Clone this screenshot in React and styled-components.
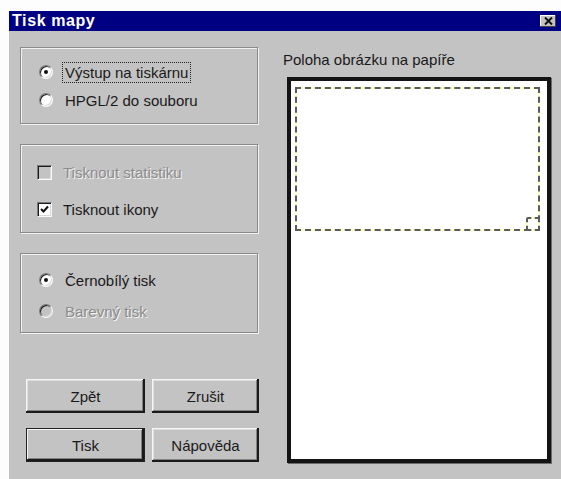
import React from "react";
import styled, { createGlobalStyle, css } from "styled-components";

const Global = createGlobalStyle`
  html, body { margin: 0; padding: 0; background: #fdfdfd; }
  body { font-family: "Liberation Sans", Arial, sans-serif; }
`;

const Dialog = styled.div`
  margin: 11px 0 0 9px;
  width: 552px;
  height: 468px;
  background: #c3c3c3;
  display: flex;
  flex-direction: column;
  overflow: hidden;
`;

const TitleBar = styled.div`
  height: 20px;
  background: #000082;
  color: #fff;
  display: flex;
  align-items: center;
  justify-content: space-between;
  padding: 0 5px 0 3px;
  font-weight: bold;
  font-size: 16px;
  letter-spacing: 0.6px;
`;

const CloseBox = styled.div`
  width: 16px;
  height: 12px;
  background: #c3c3c3;
  box-shadow: inset -1px -1px #404040, inset 1px 1px #fff;
  display: flex;
  align-items: center;
  justify-content: center;
`;

const Body = styled.div`
  flex: 1;
  display: grid;
  grid-template-columns: 238px 268px;
  column-gap: 25px;
  padding: 16px 10px 0 11px;
`;

const LeftCol = styled.div`
  display: flex;
  flex-direction: column;
`;

const Group = styled.div`
  display: flex;
  flex-direction: column;
  border: 1px solid #8a8a8a;
  box-shadow: inset 1px 1px 0 #f2f2f2, 1px 1px 0 #f2f2f2;
  padding: ${(p) => p.$pad};
  gap: ${(p) => p.$gap}px;
  margin-bottom: 20px;
`;

const Row = styled.label`
  display: flex;
  align-items: center;
  height: 20px;
  padding-left: ${(p) => p.$indent}px;
  font-size: 15px;
  color: ${(p) => (p.$disabled ? "#8c8c8c" : "#1a1a1a")};
  text-shadow: ${(p) => (p.$disabled ? "1px 1px 0 #f4f4f4" : "none")};
`;

const Radio = styled.span`
  box-sizing: border-box;
  width: 14px;
  height: 14px;
  border-radius: 50%;
  background: ${(p) => (p.$disabled ? "#c3c3c3" : "#fff")};
  border: 1px solid;
  border-color: #7a7a7a #fafafa #fafafa #7a7a7a;
  box-shadow: inset 1px 1px 0 #1a1a1a, inset -1px -1px 0 #d8d8d8;
  display: flex;
  align-items: center;
  justify-content: center;
  margin-right: ${(p) => p.$gap}px;
  flex: none;
  &::after {
    content: "";
    width: 4px;
    height: 4px;
    border-radius: 50%;
    background: #111;
    display: ${(p) => (p.$on ? "block" : "none")};
  }
`;

const Check = styled.span`
  box-sizing: border-box;
  width: 15px;
  height: 15px;
  background: ${(p) => (p.$disabled ? "#c3c3c3" : "#fff")};
  border: 1px solid;
  border-color: #7a7a7a #fafafa #fafafa #7a7a7a;
  box-shadow: inset 1px 1px 0 #1a1a1a, inset -1px -1px 0 #d8d8d8;
  margin-right: 11px;
  display: flex;
  align-items: center;
  justify-content: center;
  flex: none;
`;

const Caption = styled.span`
  padding: 1px 2px;
  margin-left: -3px;
  border: 1px dotted ${(p) => (p.$focus ? "#222" : "transparent")};
`;

const Buttons = styled.div`
  display: grid;
  grid-template-columns: 119px 107px;
  grid-auto-rows: 34px;
  column-gap: 7px;
  row-gap: 15px;
  margin: 26px 0 0 6px;
`;

const Button = styled.div`
  display: flex;
  align-items: center;
  justify-content: center;
  font-size: 15px;
  color: #1a1a1a;
  background: #c3c3c3;
  box-shadow: inset -2px -2px #1a1a1a, inset 1px 1px #f6f6f6,
    inset -3px -3px #828282, inset 2px 2px #dedede;
  ${(p) =>
    p.$default &&
    css`
      box-shadow: inset 0 0 0 1px #222, inset -3px -3px #1a1a1a,
        inset 2px 2px #f6f6f6, inset -4px -4px #828282;
    `}
`;

const RightCol = styled.div`
  display: flex;
  flex-direction: column;
  padding-top: 4px;
`;

const Label = styled.div`
  font-size: 15px;
  line-height: 18px;
  color: #1a1a1a;
  margin-bottom: 8px;
`;

const Paper = styled.div`
  box-sizing: border-box;
  height: 386px;
  margin-left: 4px;
  background: #fff;
  border: 4px solid #141414;
  box-shadow: 1px 1px 0 #6a6a6a;
  padding: 6px 7px 0 4px;
`;

/* printable region: dark dashes over a pale yellow line */
const PrintArea = styled.div`
  position: relative;
  height: 140px;
  border: 2px dashed #5a5a5a;
  background: linear-gradient(#fff, #fff) padding-box, #ffffc4 border-box;
`;

const Handle = styled.div`
  position: absolute;
  right: -2px;
  bottom: -2px;
  width: 10px;
  height: 10px;
  border: 2px dashed #5a5a5a;
  border-radius: 2px;
  background: linear-gradient(#fff, #fff) padding-box, #ffffc4 border-box;
`;

const RadioRow = ({ on, disabled, focus, children }) => (
  <Row $indent={18} $disabled={disabled}>
    <Radio $on={on} $disabled={disabled} $gap={12} />
    <Caption $focus={focus}>{children}</Caption>
  </Row>
);

const CheckRow = ({ on, disabled, children }) => (
  <Row $indent={16} $disabled={disabled}>
    <Check $disabled={disabled}>
      {on && (
        <svg width="9" height="9" viewBox="0 0 9 9">
          <path d="M1 4 L3.5 6.5 L8 1.5" stroke="#111" strokeWidth="2" fill="none" />
        </svg>
      )}
    </Check>
    <Caption>{children}</Caption>
  </Row>
);

export default function App() {
  return (
    <>
      <Global />
      <Dialog>
        <TitleBar>
          <span>Tisk mapy</span>
          <CloseBox>
            <svg width="9" height="8" viewBox="0 0 9 8">
              <path d="M1 0.5 L8 7.5 M8 0.5 L1 7.5" stroke="#111" strokeWidth="2" />
            </svg>
          </CloseBox>
        </TitleBar>
        <Body>
          <LeftCol>
            <Group $pad="14px 0 13px" $gap={8}>
              <RadioRow on focus>Výstup na tiskárnu</RadioRow>
              <RadioRow>HPGL/2 do souboru</RadioRow>
            </Group>
            <Group $pad="17px 0 13px" $gap={17}>
              <CheckRow disabled>Tisknout statistiku</CheckRow>
              <CheckRow on>Tisknout ikony</CheckRow>
            </Group>
            <Group $pad="16px 0 11px" $gap={11}>
              <RadioRow on>Černobílý tisk</RadioRow>
              <RadioRow disabled>Barevný tisk</RadioRow>
            </Group>
            <Buttons>
              <Button>Zpět</Button>
              <Button>Zrušit</Button>
              <Button $default>Tisk</Button>
              <Button>Nápověda</Button>
            </Buttons>
          </LeftCol>
          <RightCol>
            <Label>Poloha obrázku na papíře</Label>
            <Paper>
              <PrintArea>
                <Handle />
              </PrintArea>
            </Paper>
          </RightCol>
        </Body>
      </Dialog>
    </>
  );
}
